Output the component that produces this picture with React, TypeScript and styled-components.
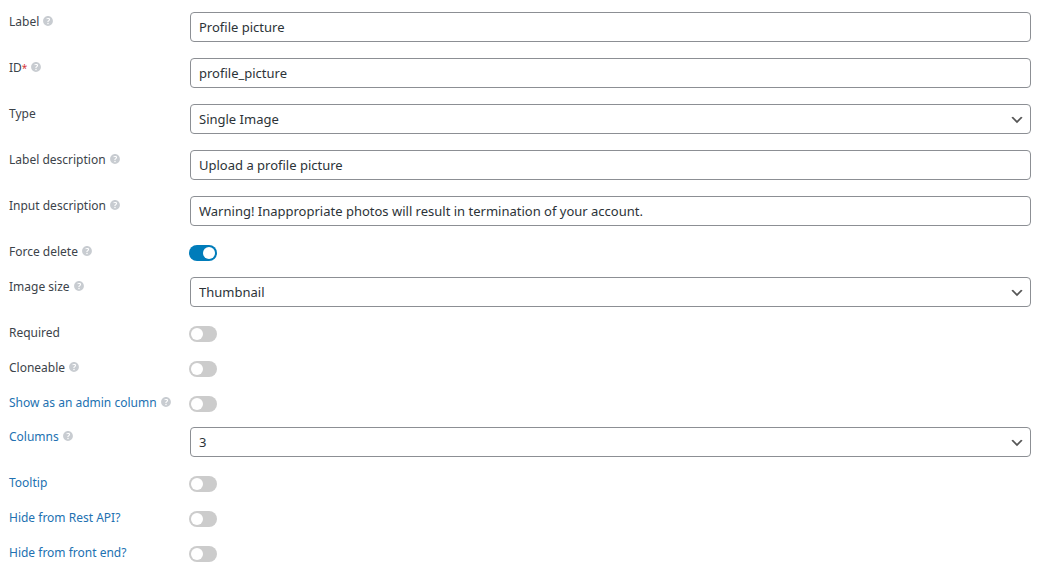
import React, { useState } from "react";
import styled, { createGlobalStyle, css } from "styled-components";

const GlobalStyle = createGlobalStyle`
  *, *::before, *::after { box-sizing: border-box; }
  body {
    margin: 0;
    background: #fff;
    color: #3c434a;
    font-family: "Segoe UI", "Noto Sans", "Open Sans", sans-serif;
    font-size: 13px;
  }
`;

const Form = styled.form`
  display: flex;
  flex-direction: column;
  gap: 15px;
  padding: 12px 16px 12px 9px;
`;

const Group = styled.div`
  display: flex;
  flex-direction: column;
  gap: 16px;
`;

const Row = styled.div`
  display: grid;
  grid-template-columns: 180px minmax(0, 1fr);
  align-items: start;
`;

const LabelCell = styled.div`
  display: flex;
  align-items: flex-start;
  gap: 2px;
  height: 19px;
  font-size: 12px;
  line-height: 20px;
  white-space: nowrap;
`;

const LabelLink = styled.a`
  color: #2271b1;
  text-decoration: none;
`;

const Asterisk = styled.span`
  color: #d63638;
  font-size: 10px;
  line-height: 1;
`;

const HelpButton = styled.button`
  display: flex;
  margin: 2px 0 0;
  padding: 0;
  border: 0;
  background: none;
  color: #c8ccd1;
  cursor: help;
`;

const control = css`
  display: block;
  height: 30px;
  padding: 0 8px;
  border: 1px solid #8c8f94;
  border-radius: 4px;
  background: #fff;
  color: #2c3338;
  font-family: inherit;
  font-size: 13px;
  line-height: 28px;
`;

const TextInput = styled.input`
  ${control}
  width: calc(100% - 2px);
  margin: 0 1px;
`;

const SelectBox = styled.div`
  position: relative;
  margin: 0 1px;
`;

const Select = styled.select`
  ${control}
  width: 100%;
  padding-right: 24px;
  appearance: none;
`;

const Chevron = styled.svg`
  position: absolute;
  top: 8px;
  right: 6px;
  width: 16px;
  height: 16px;
  fill: #555;
  pointer-events: none;
`;

const Switch = styled.input`
  display: block;
  appearance: none;
  width: 28px;
  height: 16px;
  margin: 3px 0 0;
  padding: 2px;
  border-radius: 8px;
  background: #ccc;
  cursor: pointer;

  &::before {
    content: "";
    display: block;
    width: 12px;
    height: 12px;
    border-radius: 50%;
    background: #fff;
  }

  &:checked {
    background: #007cba;
  }

  &:checked::before {
    margin-left: 12px;
  }
`;

const SwitchCell = styled.div`
  height: 19px;
`;

function HelpIcon() {
  return (
    <svg width="14" height="14" viewBox="0 0 20 20" fill="currentColor" aria-hidden="true">
      <path d="M17 10c0-3.87-3.14-7-7-7-3.87 0-7 3.13-7 7s3.13 7 7 7c3.86 0 7-3.13 7-7zm-6.3 1.48H9.14v-.43c0-.38.08-.7.24-.98s.46-.57.88-.89c.41-.29.68-.53.81-.71.14-.18.2-.39.2-.62 0-.25-.09-.44-.28-.58-.19-.13-.45-.19-.79-.19-.58 0-1.25.19-2 .57l-.64-1.28c.87-.49 1.8-.74 2.77-.74.81 0 1.45.2 1.92.58.48.39.71.91.71 1.55 0 .43-.09.8-.29 1.11-.19.32-.57.67-1.11 1.06-.38.28-.61.49-.71.63-.1.15-.15.34-.15.57v.35zm-1.47 2.74c-.18-.17-.27-.42-.27-.73 0-.33.08-.58.26-.75s.43-.25.77-.25c.32 0 .57.09.75.26s.27.42.27.74c0 .3-.09.55-.27.72-.18.18-.43.27-.75.27-.33 0-.58-.09-.76-.26z" />
    </svg>
  );
}

type FieldProps = {
  id: string;
  label: string;
  help?: boolean;
  link?: boolean;
  required?: boolean;
};

function Field({ id, label, help, link, required, children }: FieldProps & { children: React.ReactNode }) {
  return (
    <Row>
      <LabelCell>
        <label htmlFor={id}>
          {link ? <LabelLink href={`#${id}`}>{label}</LabelLink> : label}
          {required && <Asterisk>*</Asterisk>}
        </label>
        {help && (
          <HelpButton type="button" aria-label={`Help: ${label}`}>
            <HelpIcon />
          </HelpButton>
        )}
      </LabelCell>
      {children}
    </Row>
  );
}

function TextField({ value, ...field }: FieldProps & { value: string }) {
  const [text, setText] = useState(value);
  return (
    <Field {...field}>
      <TextInput id={field.id} type="text" value={text} onChange={(e) => setText(e.target.value)} />
    </Field>
  );
}

function SelectField({ options, value, ...field }: FieldProps & { options: string[]; value: string }) {
  return (
    <Field {...field}>
      <SelectBox>
        <Select id={field.id} defaultValue={value}>
          {options.map((option) => (
            <option key={option}>{option}</option>
          ))}
        </Select>
        <Chevron viewBox="0 0 20 20" aria-hidden="true">
          <path d="M5 6l5 5 5-5 2 1-7 7-7-7 2-1z" />
        </Chevron>
      </SelectBox>
    </Field>
  );
}

function SwitchField({ on = false, ...field }: FieldProps & { on?: boolean }) {
  return (
    <Field {...field}>
      <SwitchCell>
        <Switch id={field.id} type="checkbox" defaultChecked={on} />
      </SwitchCell>
    </Field>
  );
}

export default function App() {
  return (
    <>
      <GlobalStyle />
      <Form onSubmit={(e) => e.preventDefault()}>
        <Group>
          <TextField id="label" label="Label" help value="Profile picture" />
          <TextField id="field-id" label="ID" required help value="profile_picture" />
          <SelectField id="type" label="Type" value="Single Image" options={["Single Image"]} />
          <TextField id="label-description" label="Label description" help value="Upload a profile picture" />
          <TextField
            id="input-description"
            label="Input description"
            help
            value="Warning! Inappropriate photos will result in termination of your account."
          />
          <SwitchField id="force-delete" label="Force delete" help on />
          <SelectField id="image-size" label="Image size" help value="Thumbnail" options={["Thumbnail"]} />
          <SwitchField id="required" label="Required" />
          <SwitchField id="cloneable" label="Cloneable" help />
          <SwitchField id="admin-column" label="Show as an admin column" help link />
        </Group>
        <Group>
          <SelectField id="columns" label="Columns" help link value="3" options={["1", "2", "3", "4", "6", "12"]} />
          <SwitchField id="tooltip" label="Tooltip" link />
          <SwitchField id="hide-rest" label="Hide from Rest API?" link />
          <SwitchField id="hide-front" label="Hide from front end?" link />
        </Group>
      </Form>
    </>
  );
}
